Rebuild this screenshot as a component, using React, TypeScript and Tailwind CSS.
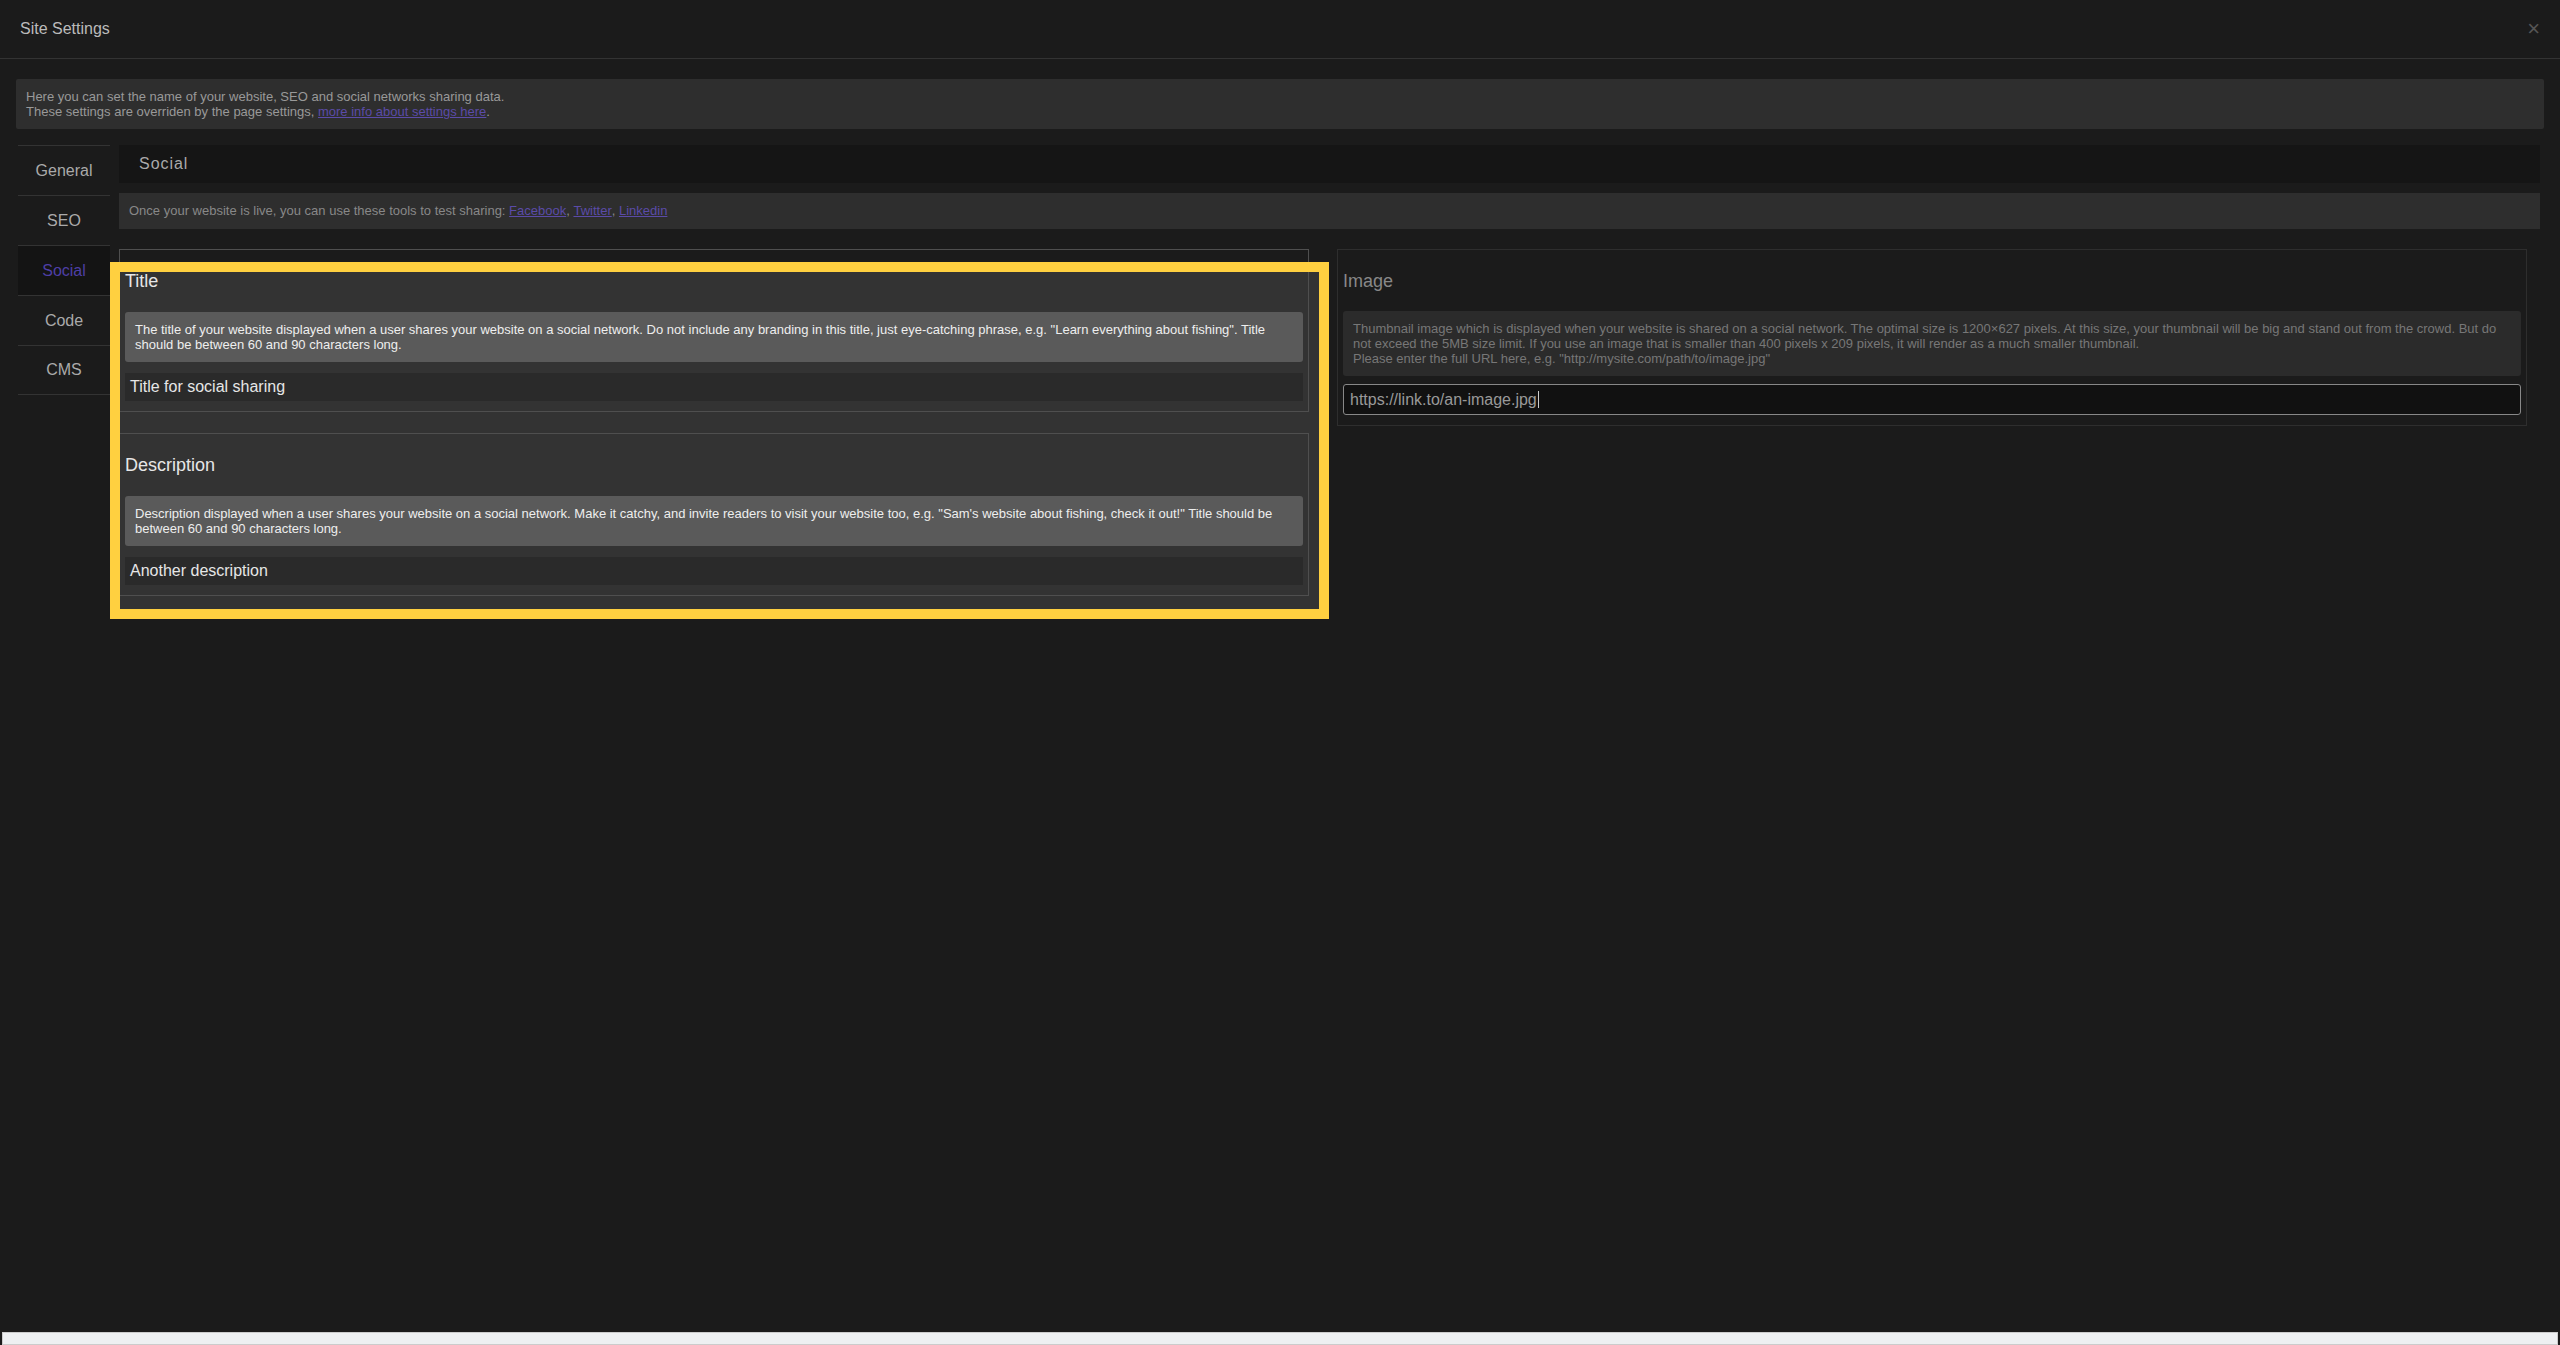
import React from "react";

const font = { fontFamily: '"Liberation Sans", Arial, sans-serif' };

const tabs = ["General", "SEO", "Social", "Code", "CMS"];

function Link({ children }: { children: React.ReactNode }) {
  return <a className="text-[#5b4ba8] underline">{children}</a>;
}

interface FieldProps {
  label: string;
  help: React.ReactNode;
  value: string;
}

function Field({ label, help, value }: FieldProps) {
  return (
    <div className="border border-[#4f4f4f] px-[5px] pt-[20px] pb-[10px]">
      <div className="text-[18px] leading-[22px] text-[#e6e6e6]">{label}</div>
      <div className="mt-[20px] rounded-[3px] bg-[#5a5a5a] px-[10px] py-[10px] text-[13px] leading-[15px] text-[#eee]">
        {help}
      </div>
      <div className="mt-[11px] flex h-[28px] items-center bg-[#2a2a2a] px-[5px] text-[16px] text-[#e6e6e6]">
        {value}
      </div>
    </div>
  );
}

export default function App() {
  return (
    <div className="flex h-screen flex-col bg-[#1b1b1b]" style={font}>
      <div className="flex h-[59px] shrink-0 items-center justify-between border-b border-[#333] px-[20px]">
        <span className="text-[16px] text-[#bbb]">Site Settings</span>
        <span className="text-[22px] leading-none text-[#555]">×</span>
      </div>

      <div className="flex-1">
        <div className="mx-[16px] mt-[20px] rounded-[2px] bg-[#2e2e2e] px-[10px] py-[10px] text-[13px] leading-[15px] text-[#999]">
          <div>Here you can set the name of your website, SEO and social networks sharing data.</div>
          <div>
            These settings are overriden by the page settings, <Link>more info about settings here</Link>.
          </div>
        </div>

        <div className="mt-[16px] flex gap-[9px] pl-[18px]">
          <div className="w-[92px] shrink-0">
            {tabs.map((t) => (
              <div
                key={t}
                className={`flex h-[50px] items-center justify-center border-t border-[#333] text-[16px] last:border-b ${
                  t === "Social" ? "bg-[#141414] text-[#4e3fa6]" : "text-[#aaa]"
                }`}
              >
                {t}
              </div>
            ))}
          </div>

          <div className="flex-1 pr-[20px]">
            <div className="flex h-[38px] items-center bg-[#151515] pl-[20px] text-[16px] tracking-[0.06em] text-[#aaa]">
              Social
            </div>
            <div className="mt-[10px] flex h-[36px] items-center bg-[#2e2e2e] pl-[10px] text-[13px] text-[#888]">
              Once your website is live, you can use these tools to test sharing:&nbsp;
              <Link>Facebook</Link>,&nbsp;<Link>Twitter</Link>,&nbsp;<Link>Linkedin</Link>
            </div>

            <div className="mt-[20px] grid grid-cols-2 gap-[28px] pr-[13px]">
              <div className="relative">
                <div className="absolute top-[13px] left-[-9px] right-[-20px] h-[357px] bg-[#333]" />
                <div className="relative z-10 flex flex-col gap-[21px]">
                  <Field
                    label="Title"
                    help={
                      <>
                        The title of your website displayed when a user shares your website on a social network. Do not include any branding in this title, just eye-catching phrase, e.g. "Learn everything about fishing". Title should be between 60 and 90 characters long.
                      </>
                    }
                    value="Title for social sharing"
                  />
                  <Field
                    label="Description"
                    help={
                      <>
                        Description displayed when a user shares your website on a social network. Make it catchy, and invite readers to visit your website too, e.g. "Sam's website about fishing, check it out!" Title should be between 60 and 90 characters long.
                      </>
                    }
                    value="Another description"
                  />
                </div>
                <div className="pointer-events-none absolute top-[13px] left-[-9px] right-[-20px] z-20 h-[357px] border-[10px] border-[#ffd040]" />
              </div>

              <div className="self-start border border-[#2e2e2e] px-[5px] pt-[20px] pb-[10px]">
                <div className="text-[18px] leading-[22px] text-[#888]">Image</div>
                <div className="mt-[19px] rounded-[3px] bg-[#2b2b2b] px-[10px] py-[10px] text-[13px] leading-[15px] text-[#777]">
                  Thumbnail image which is displayed when your website is shared on a social network. The optimal size is 1200×627 pixels. At this size, your thumbnail will be big and stand out from the crowd. But do not exceed the 5MB size limit. If you use an image that is smaller than 400 pixels x 209 pixels, it will render as a much smaller thumbnail.
                  <br />
                  Please enter the full URL here, e.g. "http://mysite.com/path/to/image.jpg"
                </div>
                <div className="mt-[8px] flex h-[31px] items-center rounded-[3px] border border-[#888] bg-[#111] px-[6px] text-[16px] text-[#999]">
                  https://link.to/an-image.jpg<span className="ml-px h-[17px] w-px bg-[#ccc]" />
                </div>
              </div>
            </div>
          </div>
        </div>
      </div>

      <div className="mx-[2px] h-[13px] shrink-0 border border-[#ccc] bg-[#eef0f2]" />
    </div>
  );
}
